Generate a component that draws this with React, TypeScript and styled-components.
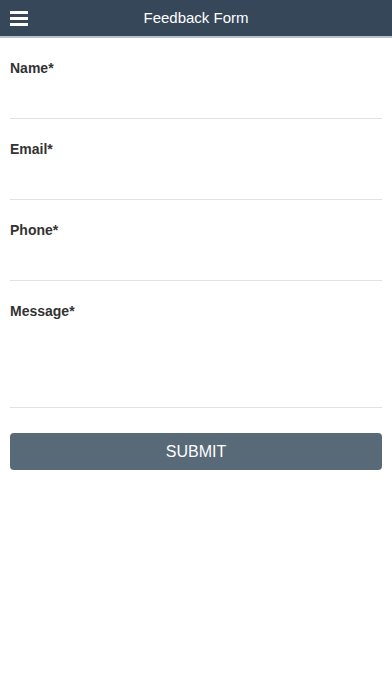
import * as React from "react";
import styled, { createGlobalStyle } from "styled-components";

const GlobalStyle = createGlobalStyle`
  html, body {
    margin: 0;
    padding: 0;
    background: #ffffff;
    font-family: "Liberation Sans", Arial, sans-serif;
  }
`;

const Page = styled.div`
  width: 392px;
  min-height: 696px;
  background: #ffffff;
`;

const Header = styled.header`
  position: relative;
  display: flex;
  align-items: center;
  justify-content: center;
  height: 35px;
  padding-bottom: 1px;
  background: #364759;
  border-bottom: 2px solid #b4c3cf;
`;

const MenuButton = styled.button`
  position: absolute;
  left: 10px;
  top: 11px;
  display: flex;
  flex-direction: column;
  gap: 3px;
  padding: 0;
  border: none;
  background: transparent;
`;

const MenuBar = styled.span`
  display: block;
  width: 18px;
  height: 3px;
  background: #ffffff;
`;

const Title = styled.h1`
  margin: 0;
  font-size: 15px;
  font-weight: 400;
  color: #ffffff;
`;

const Form = styled.form`
  display: flex;
  flex-direction: column;
  padding: 0 10px;
`;

const Field = styled.label<{ $tall?: boolean }>`
  display: flex;
  flex-direction: column;
  height: ${(p) => (p.$tall ? "126px" : "80px")};
  border-bottom: 1px solid #e2e2e2;
`;

const FieldLabel = styled.span`
  padding-top: 22px;
  font-size: 14px;
  font-weight: 700;
  color: #333333;
`;

const SubmitButton = styled.button`
  margin-top: 25px;
  height: 37px;
  border: none;
  border-radius: 4px;
  background: #586978;
  color: #ffffff;
  font-family: "Liberation Sans", Arial, sans-serif;
  font-size: 16px;
`;

const fields = [
  { label: "Name*" },
  { label: "Email*" },
  { label: "Phone*" },
  { label: "Message*", tall: true },
];

export default function App() {
  return (
    <Page>
      <GlobalStyle />
      <Header>
        <MenuButton type="button" aria-label="Menu">
          <MenuBar />
          <MenuBar />
          <MenuBar />
        </MenuButton>
        <Title>Feedback Form</Title>
      </Header>
      <Form onSubmit={(e) => e.preventDefault()}>
        {fields.map((f) => (
          <Field key={f.label} $tall={f.tall}>
            <FieldLabel>{f.label}</FieldLabel>
          </Field>
        ))}
        <SubmitButton type="submit">SUBMIT</SubmitButton>
      </Form>
    </Page>
  );
}
